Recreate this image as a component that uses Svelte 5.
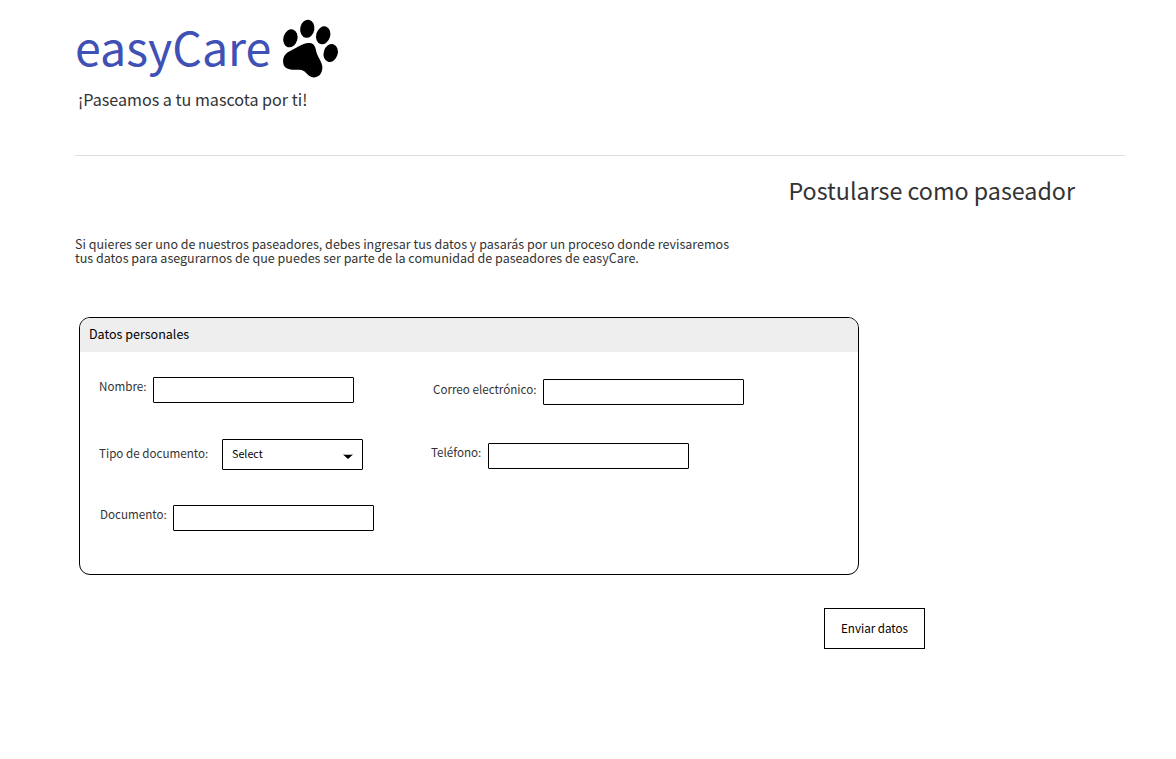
<script>
  let name = $state('');
  let documentNumber = $state('');
  let email = $state('');
  let phone = $state('');
</script>

<main>
  <header>
    <div class="brand">
      <h1>easyCare</h1>
      <svg class="paw" viewBox="0 0 80 80" width="80" height="80" aria-hidden="true">
        <ellipse cx="20.4" cy="28.3" rx="7" ry="9.2" transform="rotate(16 20.4 28.3)" />
        <ellipse cx="37.3" cy="18.8" rx="7.1" ry="9.1" transform="rotate(10 37.3 18.8)" />
        <ellipse cx="53.2" cy="25.3" rx="7" ry="9.2" transform="rotate(17 53.2 25.3)" />
        <ellipse cx="60.7" cy="43" rx="7" ry="9.2" transform="rotate(17 60.7 43)" />
        <path d="M38.7 32.9C43 32.8 45.2 35.5 45.8 39.5C46.8 46.5 52.4 51.5 52.4 57.5C52.2 64 48.5 67.4 43.5 67.4C38 67.4 36.2 61.2 31.5 60.1C27.5 59.3 24.5 60.2 20.5 59.5C15.5 58.7 13.1 56 13.1 51.5C13.1 47 15 43.5 20 41C27 37.8 31.5 33.3 38.7 32.9Z" />
      </svg>
    </div>
    <p class="tagline">¡Paseamos a tu mascota por ti!</p>
  </header>

  <h2>Postularse como paseador</h2>
  <p class="intro">
    Si quieres ser uno de nuestros paseadores, debes ingresar tus datos y pasarás por un proceso donde revisaremos<br />
    tus datos para asegurarnos de que puedes ser parte de la comunidad de paseadores de easyCare.
  </p>

  <section class="panel">
    <h3>Datos personales</h3>
    <div class="fields">
      <div class="column left">
        <div class="field name">
          <label for="name">Nombre:</label>
          <input id="name" bind:value={name} />
        </div>
        <div class="field type">
          <span class="label">Tipo de documento:</span>
          <button type="button" class="select">
            <span>Select</span>
            <svg viewBox="0 0 10 5" width="10" height="5" aria-hidden="true"><path d="M0 0.4Q5 1.2 10 0.4L5 5Z" /></svg>
          </button>
        </div>
        <div class="field document">
          <label for="document">Documento:</label>
          <input id="document" bind:value={documentNumber} />
        </div>
      </div>
      <div class="column right">
        <div class="field email">
          <label for="email">Correo electrónico:</label>
          <input id="email" bind:value={email} />
        </div>
        <div class="field phone">
          <label for="phone">Teléfono:</label>
          <input id="phone" bind:value={phone} />
        </div>
      </div>
    </div>
  </section>

  <button type="button" class="submit">Enviar datos</button>
</main>

<style>
  :global(body) { background: #fff; }
  main {
    box-sizing: border-box;
    width: 1176px;
    height: 759px;
    padding-left: 75px;
    overflow: hidden;
    font-family: "Noto Sans CJK SC", "Noto Sans", sans-serif;
    color: #333;
  }
  h1, h2, h3, p { margin: 0; font-weight: 400; white-space: nowrap; }
  header {
    box-sizing: border-box;
    width: 1050px;
    height: 156px;
    padding-top: 10px;
    border-bottom: 1px solid #ddd;
  }
  .brand { display: flex; height: 80px; }
  h1 { width: 195px; color: #3f51b5; font-size: 46.53px; line-height: 72px; }
  .paw { display: block; flex: none; }
  .tagline { padding-left: 3px; font-size: 16.11px; line-height: 18px; }
  h2 { width: 1000px; padding-top: 20px; text-align: right; font-size: 23.27px; line-height: 29px; }
  .intro { padding-top: 32px; font-size: 12.53px; line-height: 14px; }
  .panel {
    box-sizing: border-box;
    width: 780px;
    height: 258px;
    margin: 52px 0 0 4px;
    border: 1px solid #000;
    border-radius: 11px;
    overflow: hidden;
  }
  h3 { height: 34px; padding-left: 9px; background: #eee; color: #000; font-size: 12.53px; line-height: 32px; }
  .fields { display: flex; }
  .column { display: flex; flex-direction: column; }
  .left { width: 332px; padding: 25px 0 0 19px; box-sizing: border-box; }
  .right { padding: 27px 0 0 19px; }
  .field { display: flex; font-size: 11.63px; line-height: 18px; white-space: nowrap; }
  label, .label { flex: none; }
  input, .select {
    box-sizing: border-box;
    margin: 0;
    border: 1px solid #000;
    border-radius: 1px;
    background: #fff;
    outline: none;
    font-family: inherit;
  }
  input { width: 201px; height: 26px; padding: 0 8px; font-size: 11.63px; }
  .name label { width: 54px; }
  .type { margin-top: 36px; }
  .type .label { width: 123px; padding-top: 5px; }
  .select {
    display: flex;
    align-items: center;
    justify-content: space-between;
    width: 141px;
    height: 31px;
    padding: 0 9.5px 0 9px;
    color: #000;
    font-size: 10.74px;
  }
  .select span { padding-bottom: 2px; }
  .select svg { margin-top: 4px; }
  .document { margin-top: 35px; padding-left: 1px; }
  .document label { width: 73px; }
  .email { padding-left: 2px; }
  .email label { width: 110px; padding-top: 1px; }
  .phone { margin-top: 38px; }
  .phone label { width: 57px; }
  .submit {
    display: block;
    box-sizing: border-box;
    width: 101px;
    height: 41px;
    margin: 33px 0 0 749px;
    padding: 0 0 2px;
    border: 1px solid #000;
    background: #fff;
    color: #000;
    font-family: inherit;
    font-size: 11.63px;
  }
</style>
